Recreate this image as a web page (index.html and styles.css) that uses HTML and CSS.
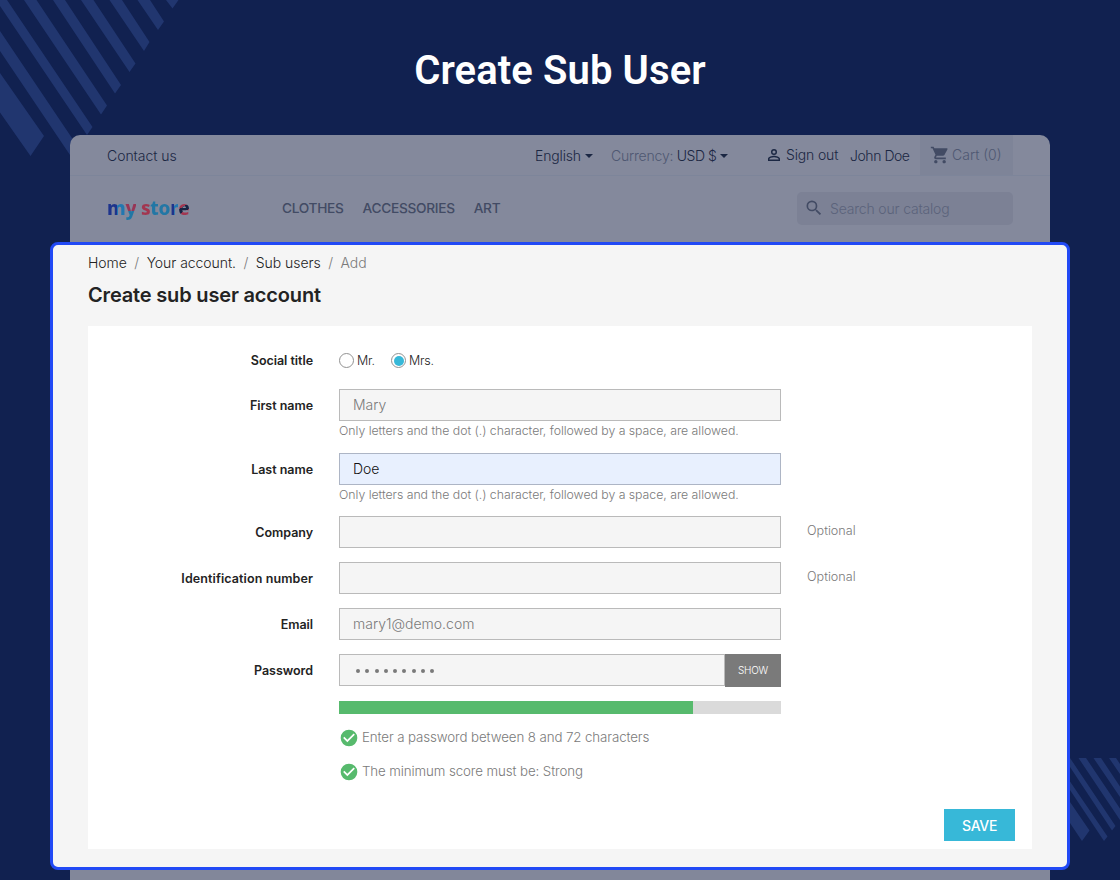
FILE: index.html
```html
<!DOCTYPE html>
<html lang="en">
<head>
    <meta charset="UTF-8">
    <meta name="viewport" content="width=device-width, initial-scale=1.0">
    <title>Create Sub User</title>
    <link rel="stylesheet" href="styles.css">
</head>
<body>
    <svg class="stripes stripes-top" width="180" height="160" viewBox="0 0 180 160">
        <path d="M0 73L44 136 30.5 156 0 112.5zM0 31L78 147 72 158 0 51zM-4 0H7L92.5 127 87 135-4 0zM24 0H36.5L107 105.5 101 114.500zM53 0H65L121 85 115 93.500zM81 0H93.500L135.500 63.500 129.500 72zM109.500 0H122L149.500 42 144 51zM137.500 0H150L164 21.500 158 30zM166 0H178.500L172.500 8.500z"/>
    </svg>
    <svg class="stripes stripes-bottom" width="50" height="90" viewBox="1070 755 50 90">
        <path d="M1070 802L1089.500 830.500 1082 841 1070 823zM1070 781.500L1107.500 836.500 1104 841 1070 790zM1070 758L1115.500 826 1112 830.500 1070 767zM1078.500 758H1086L1120 808.500V820zM1093.500 758H1101L1120 786.500V797zM1109 758H1116L1120 764V774z"/>
    </svg>

    <h1 class="page-title">Create Sub User</h1>

    <div class="store-header">
        <div class="top-bar">
            <a class="contact">Contact us</a>
            <div class="top-menu">
                <span class="language">English <i class="caret"></i></span>
                <span class="currency"><span class="muted">Currency:</span> USD $ <i class="caret"></i></span>
                <span class="sign-out">
                    <svg width="18" height="18" viewBox="0 0 24 24"><path d="M12 5.900a2.100 2.100 0 1 1 0 4.200 2.100 2.100 0 0 1 0-4.200m0 9c2.970 0 6.100 1.460 6.100 2.100v1.100H5.900V17c0-.64 3.130-2.100 6.100-2.100M12 4a4 4 0 1 0 0 8 4 4 0 0 0 0-8zm0 9c-2.670 0-8 1.340-8 4v3h16v-3c0-2.660-5.330-4-8-4z"/></svg>
                    Sign out
                </span>
                <span class="account">John Doe</span>
                <span class="cart">
                    <svg width="20" height="20" viewBox="0 0 24 24"><path d="M7 18c-1.100 0-1.990.9-1.990 2S5.900 22 7 22s2-.9 2-2-.9-2-2-2zM1 2v2h2l3.600 7.590-1.350 2.450c-.16.280-.25.610-.25.960 0 1.100.9 2 2 2h12v-2H7.420c-.14 0-.25-.11-.25-.25l.03-.12.900-1.630h7.450c.750 0 1.410-.41 1.750-1.030l3.580-6.490A1 1 0 0 0 20 4H5.210l-.94-2H1zm16 16c-1.100 0-1.990.9-1.990 2s.890 2 1.990 2 2-.9 2-2-.9-2-2-2z"/></svg>
                    Cart (0)
                </span>
            </div>
        </div>
        <div class="nav-bar">
            <div class="logo"><span class="m">m</span><span class="y">y</span> <span class="s">s</span><span class="t">t</span><span class="o">o</span><span class="r">r</span><span class="e">e</span></div>
            <nav class="menu">
                <a>CLOTHES</a>
                <a>ACCESSORIES</a>
                <a>ART</a>
            </nav>
            <div class="search">
                <svg width="20" height="20" viewBox="0 0 24 24"><path d="M15.500 14h-.79l-.28-.27A6.470 6.470 0 0 0 16 9.500 6.500 6.500 0 1 0 9.500 16c1.610 0 3.090-.59 4.230-1.570l.27.280v.790l5 4.990L20.490 19l-4.990-5zm-6 0a4.500 4.500 0 1 1 0-9 4.500 4.500 0 0 1 0 9z"/></svg>
                <span>Search our catalog</span>
            </div>
        </div>
    </div>

    <main class="content">
        <div class="breadcrumb">
            <a>Home</a><i>/</i><a>Your account.</a><i>/</i><a>Sub users</a><i>/</i><span>Add</span>
        </div>
        <h2 class="form-title">Create sub user account</h2>

        <form class="card">
            <div class="form-row radio-row">
                <label class="name">Social title</label>
                <div class="radios">
                    <label><span class="radio"></span>Mr.</label>
                    <label><span class="radio checked"></span>Mrs.</label>
                </div>
            </div>
            <div class="form-row">
                <label class="name">First name</label>
                <div>
                    <div class="field">Mary</div>
                    <div class="hint">Only letters and the dot (.) character, followed by a space, are allowed.</div>
                </div>
            </div>
            <div class="form-row">
                <label class="name">Last name</label>
                <div>
                    <div class="field autofill">Doe</div>
                    <div class="hint">Only letters and the dot (.) character, followed by a space, are allowed.</div>
                </div>
            </div>
            <div class="form-row">
                <label class="name">Company</label>
                <div class="field"></div>
                <span class="optional">Optional</span>
            </div>
            <div class="form-row">
                <label class="name wide">Identification number</label>
                <div class="field"></div>
                <span class="optional">Optional</span>
            </div>
            <div class="form-row">
                <label class="name">Email</label>
                <div class="field">mary1@demo.com</div>
            </div>
            <div class="form-row">
                <label class="name">Password</label>
                <div>
                    <div class="password">
                        <div class="field dots"><i></i><i></i><i></i><i></i><i></i><i></i><i></i><i></i><i></i></div>
                        <span class="show">SHOW</span>
                    </div>
                    <div class="meter"><div class="meter-fill" style="width: 80%"></div></div>
                    <div class="rule">
                        <svg width="20" height="20" viewBox="0 0 24 24"><path d="M12 2a10 10 0 1 0 0 20 10 10 0 0 0 0-20zm-2 15l-5-5 1.410-1.410L10 14.170l7.590-7.590L19 8l-9 9z"/></svg>
                        Enter a password between 8 and 72 characters
                    </div>
                    <div class="rule">
                        <svg width="20" height="20" viewBox="0 0 24 24"><path d="M12 2a10 10 0 1 0 0 20 10 10 0 0 0 0-20zm-2 15l-5-5 1.410-1.410L10 14.170l7.590-7.590L19 8l-9 9z"/></svg>
                        The minimum score must be: Strong
                    </div>
                </div>
            </div>
            <div class="actions"><span class="save">SAVE</span></div>
        </form>
    </main>

    <div class="store-footer"></div>
</body>
</html>
```

FILE: styles.css
```css
:root {
    --navy: #112150;
    --stripe: #21366f;
    --panel: #84899c;
    --panel-text: #1b2743;
    --text: #232323;
    --gray: #7a7a7a;
    --border: #bababa;
    --cyan: #37b8d8;
    --green: #57ba6d;
}

* {
    box-sizing: border-box;
}

body {
    position: relative;
    height: 880px;
    margin: 0;
    overflow: hidden;
    background: var(--navy);
    color: var(--text);
    font-family: Inter, "Noto Sans", sans-serif;
    font-weight: 300;
}

.stripes {
    position: absolute;
    fill: var(--stripe);
    z-index: -1;
}

.stripes-top {
    left: 0;
    top: 0;
}

.stripes-bottom {
    right: 0;
    top: 755px;
}

.page-title {
    height: 135px;
    margin: 0;
    padding-top: 47px;
    color: #fff;
    font: 600 40px/48px Roboto, sans-serif;
    letter-spacing: 0.1px;
    text-align: center;
}

/* store header */
.store-header {
    height: 107px;
    margin: 0 70px;
    background: var(--panel);
    border-radius: 10px 10px 0 0;
    color: var(--panel-text);
    font-size: 14px;
}

.top-bar {
    display: flex;
    justify-content: space-between;
    height: 41px;
    padding: 0 37px;
    border-bottom: 1px solid #7d859a;
    line-height: 42px;
}

.top-menu {
    display: flex;
}

.contact {
    letter-spacing: -0.05px;
}

.language {
    width: 76px;
    letter-spacing: -0.15px;
}

.currency {
    width: 155px;
    letter-spacing: -0.45px;
}

.muted {
    color: #4f5872;
    letter-spacing: -0.2px;
}

.caret {
    display: inline-block;
    border: 4px solid transparent;
    border-top-color: var(--panel-text);
    border-bottom: 0;
    vertical-align: 3px;
}

.sign-out {
    display: flex;
    align-items: center;
    gap: 3px;
    width: 84px;
    letter-spacing: -0.15px;
    white-space: nowrap;
}

.sign-out svg {
    flex-shrink: 0;
    margin-left: -1px;
    fill: var(--panel-text);
}

.account {
    width: 70px;
    letter-spacing: -0.45px;
}

.cart {
    display: flex;
    align-items: center;
    gap: 2px;
    width: 93px;
    padding-left: 10px;
    background: #7e8498;
    color: #4f5872;
    line-height: 40px;
}

.cart svg,
.search svg {
    fill: #424b64;
}

.nav-bar {
    display: flex;
    align-items: center;
    height: 66px;
    padding: 0 37px 2px;
}

.logo {
    width: 175px;
    font: 800 19px/24px "Noto Sans", sans-serif;
    letter-spacing: -0.3px;
    color: #1e6f9f;
}

.logo span {
    -webkit-background-clip: text;
    background-clip: text;
    color: transparent;
}

.logo .m {
    background-image: linear-gradient(90deg, #1e348c 55%, #2277b0 55%);
}

.logo .y {
    background-image: linear-gradient(#973656 62%, #2277a5 62%);
}

.logo .s {
    background-image: linear-gradient(#a23650, #a23650);
}

.logo .t,
.logo .o {
    background-image: linear-gradient(#2277a5, #2277a5);
}

.logo .r {
    background-image: linear-gradient(90deg, #1e348c 55%, #2277b0 55%);
}

.logo .e {
    background-image: linear-gradient(150deg, #a23650 45%, #182444 45%, #182444 62%, #a23650 62%);
}

.menu {
    display: flex;
    gap: 19px;
    color: #424b64;
    font-weight: 500;
    font-size: 13.7px;
    letter-spacing: -0.3px;
}

.search {
    display: flex;
    align-items: center;
    gap: 6px;
    width: 216px;
    height: 33px;
    margin-left: auto;
    padding-left: 7px;
    background: #7c8195;
    border-radius: 5px;
    color: #5b637b;
    letter-spacing: -0.18px;
}

/* highlighted page content */
.content {
    height: 628px;
    margin: 0 50px;
    padding: 9px 35px 0;
    background: #f5f5f5;
    border: 3px solid #2149f5;
    border-radius: 8px;
}

.breadcrumb {
    font-size: 14px;
    line-height: 18px;
    letter-spacing: -0.05px;
}

.breadcrumb i {
    margin: 0 7.5px;
    color: var(--gray);
    font-style: normal;
}

.breadcrumb span {
    color: var(--gray);
}

.form-title {
    margin: 9px 0 16px;
    font-size: 20px;
    font-weight: 600;
    line-height: 29px;
    letter-spacing: -0.17px;
}

.card {
    height: 523px;
    background: #fff;
}

.form-row {
    display: grid;
    grid-template-columns: 225px 442px 1fr;
    column-gap: 26px;
    margin-bottom: 13.8px;
}

.name {
    padding-top: 1px;
    font-size: 12.5px;
    font-weight: 600;
    line-height: 31px;
    letter-spacing: -0.04px;
    text-align: right;
}

.name.wide {
    letter-spacing: 0.1px;
}

.radio-row {
    padding-top: 18px;
    margin-bottom: 13px;
}

.radios {
    display: flex;
    align-items: center;
    gap: 16px;
    font-size: 12.5px;
    letter-spacing: -0.2px;
}

.radios label {
    display: flex;
    align-items: center;
    gap: 3px;
}

.radio {
    width: 15px;
    height: 15px;
    border: 1px solid #929292;
    border-radius: 50%;
}

.radio.checked {
    padding: 1.5px;
    background: var(--cyan) content-box;
}

.field {
    height: 32.1px;
    padding-left: 13px;
    background: #f5f5f5;
    border: 1px solid var(--border);
    color: var(--gray);
    font-size: 14px;
    line-height: 30px;
}

.field.autofill {
    background: #e8f0fe;
    border-color: #adb5c5;
    color: #111;
}

.hint {
    height: 17.8px;
    color: var(--gray);
    font-size: 12.3px;
    line-height: 19px;
    letter-spacing: -0.03px;
    white-space: nowrap;
}

.optional {
    color: var(--gray);
    font-size: 12.6px;
    line-height: 30px;
}

.password {
    display: flex;
}

.password .field {
    flex: 1;
}

.dots {
    display: flex;
    align-items: center;
    gap: 5.300px;
    padding: 2px 0 0 16px;
}

.dots i {
    width: 4px;
    height: 4px;
    background: var(--gray);
    border-radius: 50%;
}

.show {
    width: 56px;
    background: var(--gray);
    color: #fff;
    font-size: 10px;
    line-height: 33px;
    letter-spacing: -0.2px;
    text-align: center;
}

.meter {
    height: 13px;
    margin: 14px 0 13px;
    background: #dadada;
}

.meter-fill {
    height: 13px;
    background: var(--green);
}

.rule {
    display: flex;
    align-items: center;
    gap: 3px;
    height: 20px;
    margin-bottom: 14px;
    color: var(--gray);
    font-size: 13.3px;
    letter-spacing: -0.1px;
}

.rule svg {
    position: relative;
    top: 1px;
    fill: var(--green);
}

.actions {
    display: flex;
    justify-content: flex-end;
    padding-right: 17px;
}

.save {
    width: 71px;
    height: 32px;
    background: var(--cyan);
    color: #fff;
    font-size: 14px;
    font-weight: 500;
    line-height: 33px;
    letter-spacing: -0.3px;
    text-align: center;
}

.store-footer {
    height: 10px;
    margin: 0 70px;
    background: #82879a;
}
```
